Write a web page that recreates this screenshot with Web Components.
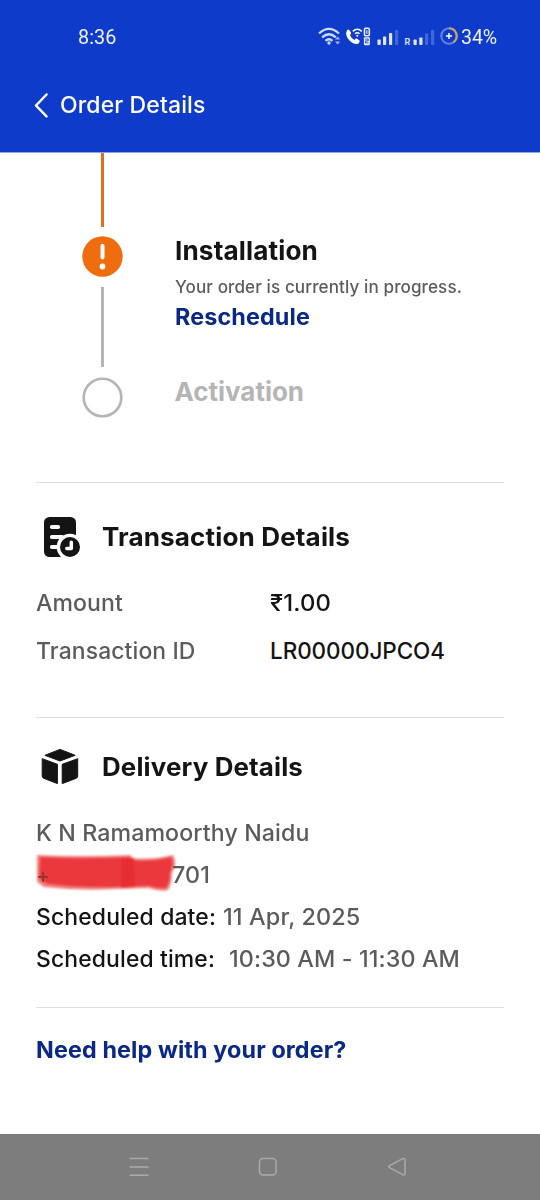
<!DOCTYPE html>
<html lang="en">
<head>
<meta charset="utf-8">
<title>Order Details</title>
<style>
html,body{margin:0;padding:0;background:#fff}
body{font-family:Inter,"Noto Sans","Liberation Sans",sans-serif;font-optical-sizing:none;color:#141414}
</style>
</head>
<body>
<order-screen></order-screen>
<script>
const define = (name, html, setup) => customElements.define(name, class extends HTMLElement {
  connectedCallback() {
    if (this.shadowRoot) return;
    const t = document.createElement('template');
    t.innerHTML = html;
    this.attachShadow({mode: 'open'}).append(t.content.cloneNode(true));
    if (setup) setup(this);
  }
});

// One line of type. "width" sets the measure of the text, "col" the width of its box.
define('type-line', `<style>
:host{display:block;white-space:pre}
span{display:inline-block;vertical-align:top;transform-origin:0 50%}
</style><span><slot></slot></span>`, el => {
  const a = n => el.getAttribute(n), span = el.shadowRoot.querySelector('span');
  el.style.fontSize = a('size') + 'px';
  el.style.lineHeight = a('line') + 'px';
  el.style.height = a('line') + 'px';
  el.style.fontWeight = a('weight') || 400;
  if (a('color')) el.style.color = a('color');
  if (a('col')) el.style.width = a('col') + 'px';
  if (a('width')) {
    const text = el.shadowRoot.querySelector('slot').assignedNodes({flatten: true}).map(n => n.textContent).join('');
    const natural = span.getBoundingClientRect().width;
    // A little tracking first; the rest of the measure is taken up by the glyphs.
    const limit = a('size') * .005;
    const gap = Math.max(-limit, Math.min(limit, (a('width') - natural) / text.length));
    span.style.letterSpacing = gap.toFixed(3) + 'px';
    const scale = a('width') / span.getBoundingClientRect().width;
    span.style.transform = 'scaleX(' + scale.toFixed(4) + ')';
    if (!a('col')) el.style.width = a('width') + 'px';
  }
});

define('status-bar', `<style>
:host{display:flex;height:74px;align-items:center;justify-content:space-between;padding:0 43px 0 78px;box-sizing:border-box;color:#eef1fd}
.r{display:flex;align-items:center;gap:0}
svg{display:block}
type-line{font-family:Roboto,sans-serif}
.time{padding-top:1px}
</style>
<type-line class="time" size="19.5" line="24" weight="450" width="38.5">8:36</type-line>
<div class="r">
<svg width="143" height="24" viewBox="0 0 143 24" fill="none" stroke="#cfd9fa" stroke-width="2.3">
 <path d="M1 8.500Q11-.8 21 8.500M4.200 12.300Q11 6.100 17.800 12.300M7.500 15.800Q11 12.800 14.500 15.800"/>
 <circle cx="11" cy="18" r="1.700" fill="#cfd9fa" stroke="none"/>
 <path d="M17 14.500l2.600-3 2.600 3zM17 16.500l2.600 3 2.600-3z" fill="#a5b6f0" stroke="none"/>
 <path d="M28.800 5.700Q30.200 3.900 31.300 5L33.100 7.700Q33.500 8.700 31.900 10 33.300 13.500 36.500 14.900 37.700 13 38.900 13.600L41.500 15.600Q42.400 16.700 40.500 18.400 36.500 20.600 31.300 15.300 26.600 10 28.800 5.700Z" fill="#fff" stroke="none"/>
 <path d="M34.800 6.400Q39.300 2 43.800 6.400M37 8.800Q39.300 6.700 41.600 8.800" stroke="#fff" stroke-width="1.500"/>
 <circle cx="39.300" cy="10.700" r="1" fill="#fff" stroke="none"/>
 <rect x="46.500" y="3.300" width="4.800" height="7.400" rx="1" stroke="#e8edff" stroke-width="1.600"/><path d="M48.900 5v4" stroke="#fff" stroke-width="1"/>
 <rect x="45.900" y="12.200" width="6" height="8" rx="1" fill="#e8edff" stroke="none"/><path d="M47.200 14.100h3v1.800h-2.700v2h3" stroke="#1742c8" stroke-width=".9"/>
 <g stroke="none" fill="#dce4ff"><rect x="59.500" y="14.500" width="3.200" height="5.500" rx=".7"/><rect x="65" y="11.500" width="3.200" height="8.500" rx=".7"/><rect x="71" y="8" width="3.200" height="12" rx=".7"/><rect x="77" y="5" width="3.200" height="15" rx=".7" fill="#4165db"/>
 <text x="86.500" y="20" font-family="Roboto" font-size="9" font-weight="600">R</text>
 <rect x="95.500" y="14.500" width="3.200" height="5.500" rx=".7"/><rect x="101.300" y="12.500" width="3.200" height="7.500" rx=".7"/><rect x="107" y="8.500" width="3.200" height="11.500" rx=".7" fill="#4165db"/><rect x="113" y="5" width="3.200" height="15" rx=".7" fill="#4165db"/></g>
 <circle cx="131" cy="11" r="7.700" stroke="#6480df" stroke-width="2"/>
 <path d="M131 3.300A7.700 7.700 0 0 1 135.500 17.200" stroke="#d5a35c" stroke-width="2"/>
 <path d="M131 7.900v6.200M127.900 11h6.200" stroke="#fff" stroke-width="1.500"/>
</svg>
<type-line size="20" line="24" weight="450" width="36">34%</type-line>
</div>`);

define('app-header', `<style>
:host{display:block;height:153px;background:#0e3bc9;color:#fff;border-bottom:1px solid #8da2e5;box-sizing:border-box}
.bar{display:flex;height:61px;align-items:center;gap:11px;padding-left:34px}
svg{display:block}
</style><status-bar></status-bar>
<div class="bar"><svg width="15" height="26" viewBox="0 0 15 26" fill="none" stroke="#fff" stroke-width="2.500" stroke-linecap="round" stroke-linejoin="round"><path d="M12.500 2.500L2 13.500l10.500 10.800"/></svg>
<type-line size="23" line="30" weight="550" width="145.500"><slot></slot></type-line></div>`);

define('order-progress', `<style>
:host{display:grid;grid-template-columns:40px 1fr;column-gap:52.500px;padding-left:82px;height:328.500px;box-sizing:border-box}
.rail{display:flex;flex-direction:column;align-items:center}
i{display:block;width:3px}
.done{height:74px;background:#df6f1e}
.todo{height:80px;background:#b5b5b5;margin:10px 0}
svg{display:block;flex:none}
.done + svg{margin-top:9px}
.copy{padding-top:82px}
.next{margin-top:49px}
</style>
<div class="rail"><i class="done"></i>
<svg width="41" height="41" viewBox="0 0 41 41"><circle cx="20.500" cy="20.500" r="20.200" fill="#ef6c0f"/><path d="M20.500 9.700v11.700" stroke="#fff" stroke-width="4" stroke-linecap="round"/><circle cx="20.500" cy="30.500" r="2.900" fill="#fff"/></svg>
<i class="todo"></i>
<svg width="41" height="41" viewBox="0 0 41 41"><circle cx="20.500" cy="20.500" r="18.800" fill="#fff" stroke="#b5b5b5" stroke-width="2.600"/></svg></div>
<div class="copy">
<type-line size="26" line="32" weight="670" width="143">Installation</type-line>
<type-line size="17" line="40" color="#5c5c5c" weight="450" width="287">Your order is currently in progress.</type-line>
<type-line size="22.500" line="20" weight="720" color="#0a2885" width="135">Reschedule</type-line>
<type-line class="next" size="26" line="32" weight="670" color="#b5b5b5" width="129.500">Activation</type-line>
</div>`);

define('section-title', `<style>
:host{display:flex;align-items:center;height:44px}
.icon{width:66px;flex:none}
</style><div class="icon"><slot name="icon"></slot></div><slot></slot>`);

define('detail-row', `<style>
:host{display:grid;grid-template-columns:234px 1fr;height:48px;align-items:center}
</style><slot></slot>`);

define('transaction-details', `<style>
:host{display:block;box-sizing:border-box;height:235px;border-top:1px solid #dfdfdf;padding-top:32px}
svg{display:block}
.rows{padding-top:20px}
</style>
<section-title><svg slot="icon" width="46" height="44" viewBox="0 0 46 44"><rect x="8" y="2" width="32" height="40" rx="5.500" fill="#141414"/><g fill="#fff"><rect x="14" y="10" width="10" height="4" rx="1.800"/><rect x="14" y="20" width="14" height="4" rx="1.800"/><rect x="14" y="30" width="14" height="4" rx="1.800"/><circle cx="34" cy="32" r="13.300"/></g><circle cx="34" cy="32" r="10" fill="#141414"/><path d="M35.300 27.200V33.400H30.800" fill="none" stroke="#fff" stroke-width="3.500" stroke-linecap="round" stroke-linejoin="round"/></svg>
<type-line size="25.500" line="36" weight="670" width="248">Transaction Details</type-line></section-title>
<div class="rows">
<detail-row><type-line size="22.500" line="30" color="#5b5b5b" weight="480" width="87">Amount</type-line><type-line size="22.500" line="30" weight="520" width="61">₹1.00</type-line></detail-row>
<detail-row><type-line size="22.500" line="30" color="#5b5b5b" weight="480" width="159.500">Transaction ID</type-line><type-line size="22.500" line="30" weight="520" width="175">LR00000JPCO4</type-line></detail-row>
</div>`);

// A number whose middle part is struck out with a marker.
define('masked-phone', `<style>
:host{display:flex;position:relative;height:42px;align-items:center;color:#5b5b5b}
.gap{width:122px}
type-line{position:relative;z-index:1}
.plus{color:#8d3535}
svg{position:absolute;left:-2px;top:-5px;width:146px;height:46px;overflow:visible}
</style><type-line class="plus" size="22" line="30" weight="400" width="14">+</type-line><div class="gap"></div><type-line size="22.500" line="30" weight="480" width="38">701</type-line>
<svg viewBox="0 0 146 46"><defs><filter id="s" x="-5%" y="-15%" width="110%" height="130%"><feGaussianBlur stdDeviation="1.300"/></filter></defs><g filter="url(#s)"><path fill="#f28080" d="M3 6Q48 8 96 6L99 9Q118 11 139 6 144 14 138 24 138 35 134 41 128 43 115 39L82 40Q45 42 10 38L3 33Z"/><path fill="#ea393c" d="M6 8Q48 10 96 8L99 11Q118 13 137 8 141 14 136 24 137 33 132 39 125 40 115 37L82 38Q45 39 13 35L5 30Z"/><path fill="#e62d31" d="M87 9h13l1 29-14 1Z"/></g></svg>`);

define('delivery-details', `<style>
:host{display:block;box-sizing:border-box;height:290px;border-top:1px solid #dfdfdf;padding-top:27px}
svg{display:block}
.rows{padding-top:23px}
.row{display:flex;align-items:center;height:42px}
</style>
<section-title><svg slot="icon" width="50" height="44" viewBox="0 0 50 44"><g fill="#141414" stroke="#141414" stroke-width="1" stroke-linejoin="round"><path d="M24 4.400L39.200 10.300 24 16 8.900 10.300Z"/><path d="M6.200 13.700L21.400 19.300V38.600L7.700 33.300Q6.200 32.700 6.200 31ZM41.700 13.700L26.200 19.300V38.600L40.200 33.300Q41.700 32.700 41.700 31Z"/></g></svg>
<type-line size="25.500" line="36" weight="670" width="201">Delivery Details</type-line></section-title>
<div class="rows">
<div class="row"><type-line size="22.500" line="30" color="#5b5b5b" weight="480" width="273.500">K N Ramamoorthy Naidu</type-line></div>
<masked-phone></masked-phone>
<div class="row"><type-line size="22.500" line="30" weight="520" width="180" col="187">Scheduled date:</type-line><type-line size="22.500" line="30" color="#5b5b5b" weight="480" width="137.500">11 Apr, 2025</type-line></div>
<div class="row"><type-line size="22.500" line="30" weight="520" width="179" col="193">Scheduled time:</type-line><type-line size="22.500" line="30" color="#5b5b5b" weight="480" width="231">10:30 AM - 11:30 AM</type-line></div>
</div>`);

define('help-link', `<style>
:host{display:flex;align-items:center;height:84px;border-top:1px solid #dfdfdf;color:#0a2885}
</style><type-line size="22.500" line="30" weight="700" width="310.500"><slot></slot></type-line>`);

define('nav-bar', `<style>
:host{display:flex;justify-content:space-between;align-items:center;height:66px;box-sizing:border-box;padding:0 133px 0 129px;background:#7d7d7d}
svg{display:block}
</style>
<svg width="20" height="20" fill="none" stroke="#aaa" stroke-width="1.500"><path d="M.5 1.500h19M.5 10h19M.5 18.200h19"/></svg>
<svg width="20" height="20" fill="none" stroke="#aaa" stroke-width="1.500"><rect x="1.500" y="1.500" width="16.500" height="16.500" rx="3.500"/></svg>
<svg width="20" height="20" fill="none" stroke="#aaa" stroke-width="1.500" stroke-linejoin="round"><path d="M2.500 8.700L15.800 1.700Q18 .9 18 3V16.500Q18 18.700 15.800 17.700L2.500 10.600Q.9 9.700 2.500 8.700Z"/></svg>`);

define('order-screen', `<style>
:host{display:flex;flex-direction:column;width:540px;height:1200px;overflow:hidden;background:#fff}
main{flex:1;min-height:0}
.sections{padding:0 36px}
</style>
<app-header>Order Details</app-header>
<main><order-progress></order-progress>
<div class="sections"><transaction-details></transaction-details><delivery-details></delivery-details><help-link>Need help with your order?</help-link></div></main>
<nav-bar></nav-bar>`);
</script>
</body>
</html>
